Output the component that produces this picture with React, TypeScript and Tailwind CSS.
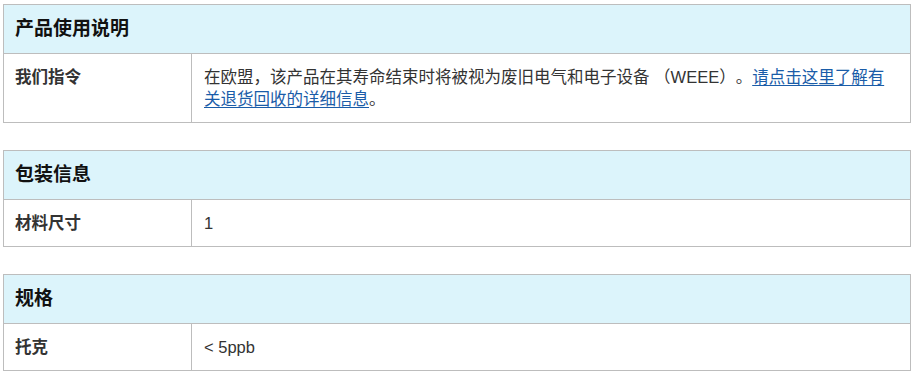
import React from 'react';

interface SpecRow {
  label: string;
  value: React.ReactNode;
}

interface SpecTable {
  title: string;
  rows: SpecRow[];
}

const tables: SpecTable[] = [
  {
    title: '产品使用说明',
    rows: [
      {
        label: '我们指令',
        value: (
          <>
            在欧盟，该产品在其寿命结束时将被视为废旧电气和电子设备 （WEEE）。
            <a href="#" className="text-[#1a5ca8] underline underline-offset-2">
              请点击这里了解有关退货回收的详细信息
            </a>
            。
          </>
        ),
      },
    ],
  },
  {
    title: '包装信息',
    rows: [{ label: '材料尺寸', value: '1' }],
  },
  {
    title: '规格',
    rows: [{ label: '托克', value: '< 5ppb' }],
  },
];

const App: React.FC = () => {
  return (
    <div
      className="min-h-screen bg-white pt-[4px] pl-[3px] pr-[1px] [text-spacing-trim:space-all]"
      style={{ fontFamily: '"Liberation Sans", "Noto Sans CJK SC", sans-serif' }}
    >
      {tables.map((table, i) => (
        <div
          key={table.title}
          className={`border border-[#bdbdbd] ${i > 0 ? 'mt-[27px]' : ''}`}
        >
          {/* header */}
          <div className="bg-[#dcf4fb] px-[11px] py-[12px] text-[19px] leading-[24px] font-bold text-[#111]">
            {table.title}
          </div>
          {table.rows.map((row) => (
            <div key={row.label} className="flex border-t border-[#bdbdbd]">
              <div className="w-[188px] shrink-0 border-r border-[#bdbdbd] px-[11px] py-[12px] text-[16.5px] leading-[22px] font-bold text-[#333]">
                {row.label}
              </div>
              <div className="flex-1 px-[12px] py-[12px] text-[16.5px] leading-[22px] text-[#333]">
                {row.value}
              </div>
            </div>
          ))}
        </div>
      ))}
    </div>
  );
};

export default App;
